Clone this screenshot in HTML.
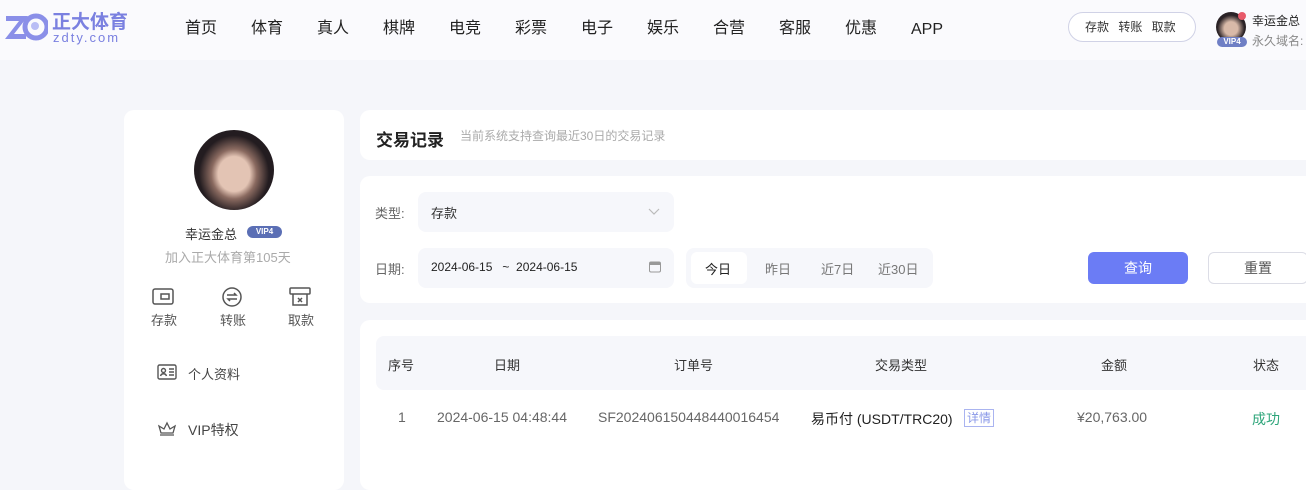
<!DOCTYPE html>
<html><head><meta charset="utf-8"><style>
*{margin:0;padding:0;box-sizing:border-box}
body{width:1306px;height:475px;overflow:hidden;background:#f5f6fa;font-family:"Liberation Sans","Noto Sans CJK SC",sans-serif;color:#333;position:relative}
.hd{position:absolute;left:0;top:0;width:1306px;height:60px;background:#fafafd}
.abs{position:absolute}
.nav span{position:absolute;top:18px;font-size:16px;color:#222;line-height:22px}
.card{position:absolute;background:#fff;border-radius:10px}
</style></head><body>
<div class="hd">
 <svg class="abs" style="left:4px;top:12px" width="44" height="30" viewBox="0 0 44 30">
  <path d="M2 4h22l-14 18h12v5H1l14-18H2z" fill="#8a8fe8"/>
  <circle cx="32" cy="15" r="11" fill="none" stroke="#8a8fe8" stroke-width="5"/>
  <circle cx="31" cy="14" r="4" fill="#b9bdf5"/>
 </svg>
 <div class="abs" style="left:52px;top:7px;font-size:19px;font-weight:bold;color:#7a80e0">正大体育</div>
 <div class="abs" style="left:53px;top:30px;font-size:13px;color:#7a80e0;letter-spacing:2px">zdty.com</div>
 <div class="nav">
  <span style="left:185px">首页</span><span style="left:251px">体育</span><span style="left:317px">真人</span><span style="left:383px">棋牌</span><span style="left:449px">电竞</span><span style="left:515px">彩票</span><span style="left:581px">电子</span><span style="left:647px">娱乐</span><span style="left:713px">合营</span><span style="left:779px">客服</span><span style="left:845px">优惠</span><span style="left:911px;top:19px">APP</span>
 </div>
 <div class="abs" style="left:1068px;top:12px;width:128px;height:30px;border:1px solid #d0d2e6;border-radius:15px;background:#fff;font-size:12px;color:#333;line-height:28px;padding-left:16px;word-spacing:6px">存款 转账 取款</div>
 <div class="abs" style="left:1216px;top:12px;width:30px;height:30px;border-radius:50%;background:radial-gradient(circle at 50% 55%,#d8b9a8 30%,#2a2226 60%)"></div>
 <div class="abs" style="left:1238px;top:12px;width:8px;height:8px;border-radius:50%;background:#e85a6a"></div>
 <div class="abs" style="left:1217px;top:37px;width:30px;height:10px;border-radius:5px;background:#6f7fc5;color:#fff;font-size:8px;line-height:10px;text-align:center;font-weight:bold">VIP4</div>
 <div class="abs" style="left:1252px;top:12px;font-size:12px;color:#222">幸运金总</div>
 <div class="abs" style="left:1252px;top:32px;font-size:12px;color:#888">永久域名:</div>
</div>

<div class="card" style="left:124px;top:110px;width:220px;height:380px">
 <div class="abs" style="left:70px;top:20px;width:80px;height:80px;border-radius:50%;background:radial-gradient(ellipse at 50% 55%,#e3c4b4 28%,#8a6a60 40%,#231c20 62%)"></div>
 <div class="abs" style="left:61px;top:114px;font-size:13px;color:#333">幸运金总</div>
 <div class="abs" style="left:123px;top:116px;width:35px;height:12px;border-radius:6px;background:#5b6fb5;color:#fff;font-size:8px;text-align:center;line-height:12px;font-weight:bold">VIP4</div>
 <div class="abs" style="left:41px;top:137px;font-size:13px;color:#aaa">加入正大体育第105天</div>
 <svg class="abs" style="left:28px;top:176px" width="160" height="22" viewBox="0 0 160 22" fill="none" stroke="#555" stroke-width="1.5">
  <rect x="1" y="3" width="20" height="15" rx="2"/><path d="M9 8h8v5H9z"/>
  <circle cx="80" cy="11" r="9"/><path d="M75 9h9l-2-2M85 13h-9l2 2"/>
  <rect x="138" y="2" width="20" height="6" rx="1"/><path d="M141 8v11h14V8M146 12l4 4M150 12l-4 4"/>
 </svg>
 <div class="abs" style="left:27px;top:200px;font-size:13px;color:#555">存款</div>
 <div class="abs" style="left:96px;top:200px;font-size:13px;color:#555">转账</div>
 <div class="abs" style="left:164px;top:200px;font-size:13px;color:#555">取款</div>
 <svg class="abs" style="left:33px;top:254px" width="20" height="16" viewBox="0 0 20 16" fill="none" stroke="#555" stroke-width="1.4"><rect x="1" y="1" width="18" height="14" rx="1.5"/><circle cx="6.5" cy="6.5" r="2"/><path d="M3.5 12c1-3 5-3 6 0M12 5h5M12 8h5M12 11h5"/></svg>
 <div class="abs" style="left:64px;top:254px;font-size:13px;color:#444">个人资料</div>
 <svg class="abs" style="left:33px;top:311px" width="20" height="16" viewBox="0 0 20 16" fill="none" stroke="#555" stroke-width="1.3"><path d="M3 14h14M4 12L2 5l5 3 3-6 3 6 5-3-2 7z"/></svg>
 <div class="abs" style="left:64px;top:310px;font-size:14px;color:#444">VIP特权</div>
</div>

<div class="card" style="left:360px;top:110px;width:960px;height:50px">
 <div class="abs" style="left:16px;top:16px;font-size:17px;font-weight:bold;color:#222">交易记录</div>
 <div class="abs" style="left:100px;top:17px;font-size:12px;color:#aaa">当前系统支持查询最近30日的交易记录</div>
</div>

<div class="card" style="left:360px;top:176px;width:960px;height:127px">
 <div class="abs" style="left:15px;top:27px;font-size:13px;color:#666">类型:</div>
 <div class="abs" style="left:58px;top:16px;width:256px;height:40px;border-radius:8px;background:#f6f7fb"></div>
 <div class="abs" style="left:71px;top:27px;font-size:13px;color:#333">存款</div>
 <svg class="abs" style="left:288px;top:32px" width="12" height="8" viewBox="0 0 12 8"><path d="M1 1l5 5 5-5" fill="none" stroke="#bbb" stroke-width="1.2"/></svg>
 <div class="abs" style="left:15px;top:83px;font-size:13px;color:#666">日期:</div>
 <div class="abs" style="left:58px;top:72px;width:256px;height:40px;border-radius:8px;background:#f6f7fb"></div>
 <div class="abs" style="left:71px;top:84px;font-size:12px;color:#222">2024-06-15 &nbsp; ~ &nbsp;2024-06-15</div>
 <svg class="abs" style="left:289px;top:85px" width="12" height="12" viewBox="0 0 12 12"><rect x="0.5" y="1" width="11" height="10" rx="1.5" fill="none" stroke="#999"/><rect x="0.5" y="1" width="11" height="3" fill="#999"/></svg>
 <div class="abs" style="left:326px;top:72px;width:247px;height:40px;border-radius:8px;background:#f6f7fb"></div>
 <div class="abs" style="left:331px;top:76px;width:56px;height:32px;border-radius:6px;background:#fff"></div>
 <div class="abs" style="left:345px;top:83px;font-size:13px;color:#222">今日</div>
 <div class="abs" style="left:405px;top:83px;font-size:13px;color:#777">昨日</div>
 <div class="abs" style="left:461px;top:83px;font-size:13px;color:#777">近7日</div>
 <div class="abs" style="left:518px;top:83px;font-size:13px;color:#777">近30日</div>
 <div class="abs" style="left:728px;top:76px;width:100px;height:32px;border-radius:6px;background:#6b7cf5;color:#fff;font-size:14px;text-align:center;line-height:32px">查询</div>
 <div class="abs" style="left:848px;top:76px;width:100px;height:32px;border-radius:6px;border:1px solid #dcdde6;background:#fff;color:#555;font-size:14px;text-align:center;line-height:30px">重置</div>
</div>

<div class="card" style="left:360px;top:320px;width:960px;height:170px">
 <div class="abs" style="left:16px;top:16px;width:944px;height:54px;border-radius:8px;background:#f6f7fb"></div>
 <div class="abs" style="top:35px;left:0;width:960px;font-size:13px;color:#333">
  <span class="abs" style="left:28px">序号</span><span class="abs" style="left:134px">日期</span><span class="abs" style="left:314px">订单号</span><span class="abs" style="left:515px">交易类型</span><span class="abs" style="left:741px">金额</span><span class="abs" style="left:893px">状态</span>
 </div>
 <div class="abs" style="top:89px;left:0;width:960px;font-size:14px;color:#666">
  <span class="abs" style="left:38px">1</span><span class="abs" style="left:77px">2024-06-15 04:48:44</span><span class="abs" style="left:238px">SF202406150448440016454</span><span class="abs" style="left:451px;color:#222">易币付 (USDT/TRC20)</span>
  <span class="abs" style="left:604px;top:0;border:1px solid #aab4f0;color:#8a98e8;font-size:12px;padding:0 2px;line-height:16px">详情</span>
  <span class="abs" style="left:717px">¥20,763.00</span><span class="abs" style="left:892px;color:#2ea57a">成功</span>
 </div>
</div>
</body></html>
